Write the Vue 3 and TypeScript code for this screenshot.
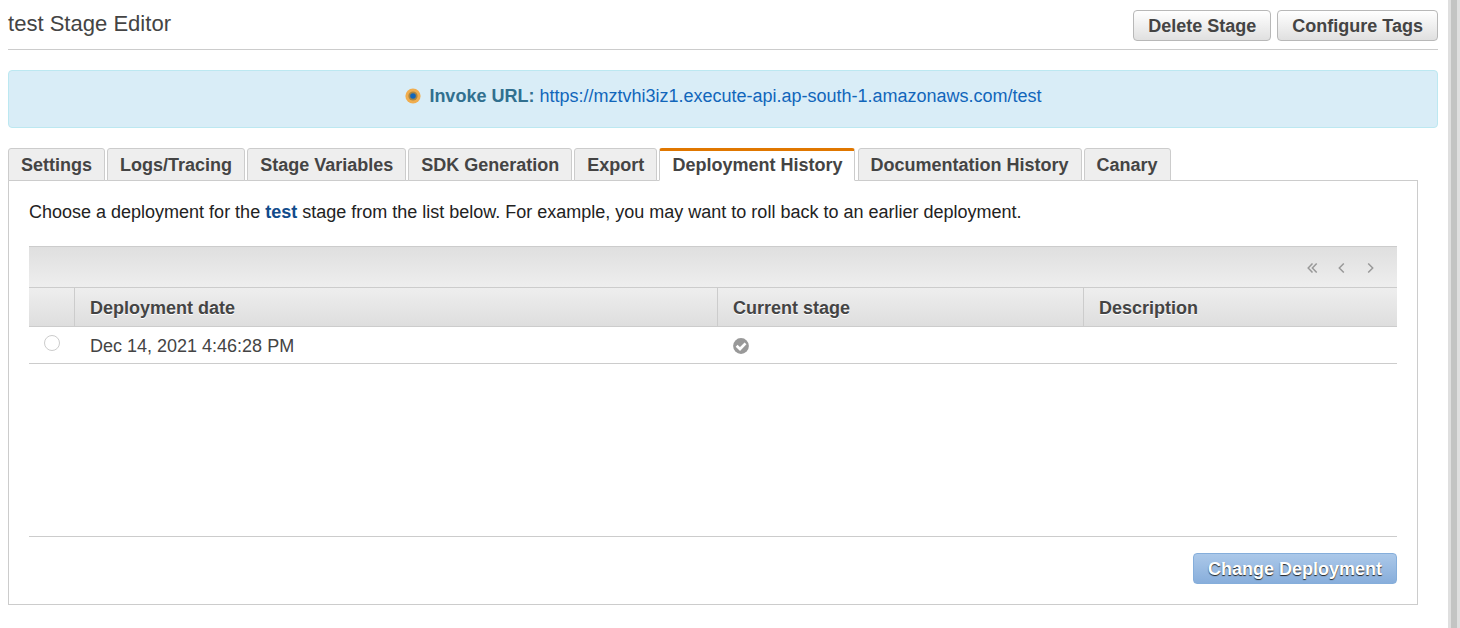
<script setup lang="ts">
import { ref } from 'vue'

interface Deployment {
  date: string
  current: boolean
  description: string
}

const stage = 'test'
const invokeUrl = 'https://mztvhi3iz1.execute-api.ap-south-1.amazonaws.com/test'
const tabs: string[] = [
  'Settings',
  'Logs/Tracing',
  'Stage Variables',
  'SDK Generation',
  'Export',
  'Deployment History',
  'Documentation History',
  'Canary',
]
const activeTab = ref('Deployment History')
const deployments: Deployment[] = [
  { date: 'Dec 14, 2021 4:46:28 PM', current: true, description: '' },
]
</script>

<template>
  <div class="page">
    <main class="editor">
      <header class="header">
        <h1>{{ stage }} Stage Editor</h1>
        <div class="actions">
          <button class="btn">Delete Stage</button>
          <button class="btn">Configure Tags</button>
        </div>
      </header>

      <div class="invoke">
        <svg class="bullet" width="16" height="16" viewBox="0 0 16 16">
          <circle cx="8" cy="8" r="7.6" fill="#f0ad4e" />
          <circle cx="8" cy="8" r="4.6" fill="#a98643" />
          <circle cx="8" cy="8" r="2.8" fill="#1166bb" />
        </svg>
        <strong>Invoke URL:</strong>
        <a>{{ invokeUrl }}</a>
      </div>

      <nav class="tabs">
        <button
          v-for="tab in tabs"
          :key="tab"
          class="tab"
          :class="{ active: tab === activeTab }"
          @click="activeTab = tab"
        >{{ tab }}</button>
      </nav>

      <section class="panel">
        <p class="intro">Choose a deployment for the <strong>{{ stage }}</strong> stage from the list below. For example, you may want to roll back to an earlier deployment.</p>

        <div class="grid">
          <div class="pager">
            <svg width="11" height="10" viewBox="0 0 11 10"><path d="M5.5 0.5L1.2 5L5.5 9.5M9.7 0.5L5.4 5L9.7 9.5" /></svg>
            <svg width="7" height="10" viewBox="0 0 7 10"><path d="M5.8 0.5L1.3 5L5.8 9.5" /></svg>
            <svg width="7" height="10" viewBox="0 0 7 10"><path d="M1.2 0.5L5.7 5L1.2 9.5" /></svg>
          </div>
          <div class="row head">
            <div class="cell"></div>
            <div class="cell">Deployment date</div>
            <div class="cell">Current stage</div>
            <div class="cell">Description</div>
          </div>
          <div v-for="d in deployments" :key="d.date" class="row item">
            <div class="cell"><span class="radio"></span></div>
            <div class="cell">{{ d.date }}</div>
            <div class="cell">
              <svg v-if="d.current" width="16" height="16" viewBox="0 0 16 16">
                <circle cx="8" cy="8" r="7.9" fill="#999" />
                <path d="M3.6 7.8L7 11L12.5 5.4" fill="none" stroke="#fff" stroke-width="2.7" />
              </svg>
            </div>
            <div class="cell">{{ d.description }}</div>
          </div>
        </div>

        <footer class="footer">
          <button class="btn primary">Change Deployment</button>
        </footer>
      </section>
    </main>
    <div class="scrollbar"><div class="thumb"></div></div>
  </div>
</template>

<style>
body {
  margin: 0;
  background: #fff;
}
</style>

<style scoped>
.page,
.page * {
  box-sizing: border-box;
}
.page {
  display: flex;
  height: 628px;
  overflow: hidden;
  font: 18.013px/24px "Liberation Sans", Arial, sans-serif;
  color: #444;
}
.editor {
  flex: 1;
  padding: 0 10px 0 8px;
}
button {
  font: inherit;
  font-weight: bold;
  color: #444;
  white-space: nowrap;
}
.header {
  display: flex;
  justify-content: space-between;
  height: 50px;
  border-bottom: 1px solid #ccc;
}
h1 {
  margin: 9px 0 0;
  font-size: 22.05px;
  line-height: 30px;
  font-weight: normal;
}
.actions {
  display: flex;
  gap: 6px;
  padding-top: 10px;
}
.btn {
  height: 31px;
  padding: 2px 14px 0;
  line-height: 27px;
  border: 1px solid #b8b8b8;
  border-radius: 4px;
  background: linear-gradient(#fff, #e0e0e0);
}
.invoke {
  display: flex;
  justify-content: center;
  height: 58px;
  margin-top: 20px;
  padding: 13px 0 0 1px;
  border: 1px solid #bce8f1;
  border-radius: 4px;
  background: #d9edf7;
}
.bullet {
  margin: 4px 8px 0 0;
}
.invoke strong {
  margin-right: 5px;
  color: #31708f;
}
.invoke a {
  color: #1166bb;
}
.tabs {
  display: flex;
  gap: 2.06px;
  margin-top: 20px;
}
.tab {
  height: 33px;
  padding: 2px 12px 0;
  line-height: 29px;
  border: 1px solid #ccc;
  border-radius: 3px 3px 0 0;
  background: #eee;
}
.tab.active {
  padding: 0 12px;
  line-height: 29px;
  border-top: 3px solid #e07700;
  border-bottom-color: #fff;
  background: #fff;
  z-index: 1;
}
.panel {
  width: 1410px;
  height: 425px;
  margin-top: -1px;
  padding: 0 20px;
  border: 1px solid #ccc;
}
.intro {
  margin: 19px 0 22px;
  color: #222;
}
.intro strong {
  color: #114b8b;
}
.grid {
  height: 291px;
  border-top: 1px solid #ccc;
  border-bottom: 1px solid #ccc;
}
.pager {
  display: flex;
  align-items: center;
  justify-content: flex-end;
  height: 41px;
  padding: 2px 23.5px 0 0;
  border-bottom: 1px solid #ccc;
  background: linear-gradient(#dfdfdf, #eee);
}
.pager svg {
  margin-left: 22px;
  fill: none;
  stroke: #999;
  stroke-width: 1.5;
}
.pager svg:nth-child(2) {
  margin-left: 19.5px;
}
.row {
  display: grid;
  grid-template-columns: 46px 643px 366px 1fr;
  border-bottom: 1px solid #ccc;
}
.cell {
  padding-left: 15px;
}
.head {
  height: 39px;
  line-height: 41px;
  font-weight: bold;
  text-shadow: 0 1px 0 #fff;
  background: linear-gradient(#eee, #dedede);
}
.head .cell {
  height: 38px;
}
.head .cell:not(:last-child) {
  border-right: 1px solid #ccc;
}
.item {
  height: 37px;
  line-height: 39px;
}
.item .cell {
  height: 36px;
}
.item svg {
  display: block;
  margin-top: 10.5px;
}
.radio {
  display: block;
  width: 16px;
  height: 16px;
  margin-top: 8px;
  border: 1px solid #ccc;
  border-radius: 50%;
}
.footer {
  display: flex;
  justify-content: flex-end;
  padding-top: 16px;
}
.primary {
  color: #fff;
  text-shadow: 0 1px 1px #222;
  border-color: #85aedb;
  background: linear-gradient(#abc8e9, #88aedb);
}
.scrollbar {
  width: 12px;
  padding: 0 3px;
  background: #dfdfdf;
}
.thumb {
  height: 100%;
  background: #c3c4c3;
}
</style>
